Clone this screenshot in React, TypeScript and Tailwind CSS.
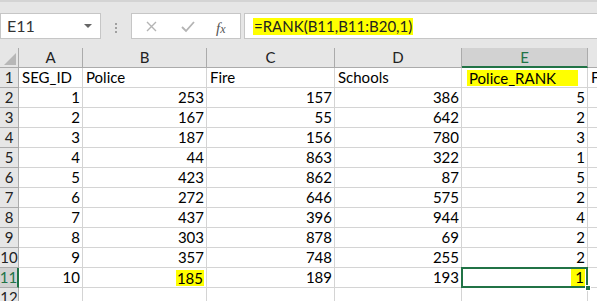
import React from "react";

const cols = [
  { key: "A", w: 64 },
  { key: "B", w: 124 },
  { key: "C", w: 128 },
  { key: "D", w: 127 },
  { key: "E", w: 126 },
];

const data: [number, number, number, number, number][] = [
  [1, 253, 157, 386, 5],
  [2, 167, 55, 642, 2],
  [3, 187, 156, 780, 3],
  [4, 44, 863, 322, 1],
  [5, 423, 862, 87, 5],
  [6, 272, 646, 575, 2],
  [7, 437, 396, 944, 4],
  [8, 303, 878, 69, 2],
  [9, 357, 748, 255, 2],
  [10, 185, 189, 193, 1],
];

const font = { fontFamily: "Lato, 'Open Sans', sans-serif" };

function Cell({ w, children, right, className = "" }: { w: number; children?: React.ReactNode; right?: boolean; className?: string }) {
  return (
    <div
      className={`shrink-0 h-full border-r border-b border-[#d4d4d4] bg-white flex items-center overflow-hidden whitespace-nowrap text-[15px] text-black ${right ? "justify-end pr-[2px]" : "pl-[3px]"} ${className}`}
      style={{ width: w }}
    >
      {children}
    </div>
  );
}

export default function App() {
  return (
    <div className="w-[597px] h-[301px] overflow-hidden bg-[#e6e6e6] relative" style={font}>
      {/* formula bar area */}
      <div className="h-[48px] border-t-[2px] border-[#d4d4d4] bg-[#e6e6e6] relative">
        <div className="absolute left-0 top-[11px] w-[101px] h-[26px] bg-white border border-[#c6c6c6] flex items-center pl-[6px] text-[16px] text-[#333]">
          E11
          <div className="absolute right-[8px] top-[10px] w-0 h-0 border-l-[4px] border-r-[4px] border-t-[4px] border-l-transparent border-r-transparent border-t-[#666]" />
        </div>
        <div className="absolute left-[115px] top-[21px] flex flex-col gap-[2px]">
          <div className="w-[2px] h-[2px] bg-[#a0a0a0]" />
          <div className="w-[2px] h-[2px] bg-[#a0a0a0]" />
          <div className="w-[2px] h-[2px] bg-[#a0a0a0]" />
        </div>
        <div className="absolute left-[131px] top-[11px] w-[110px] h-[26px] bg-white border border-[#c6c6c6] flex items-center">
          <svg className="absolute left-[14px] top-[7px]" width="11" height="11" viewBox="0 0 11 11">
            <path d="M1 1 L10 10 M10 1 L1 10" stroke="#b4b4b4" strokeWidth="1.4" />
          </svg>
          <svg className="absolute left-[49px] top-[7px]" width="14" height="12" viewBox="0 0 14 12">
            <path d="M1 6 L5 10 L13 1" stroke="#b4b4b4" strokeWidth="1.8" fill="none" />
          </svg>
          <span className="absolute left-[84px] top-[3px] text-[15px] italic text-[#555]" style={{ fontFamily: "'Liberation Serif', serif" }}>
            f<span className="text-[12px]">x</span>
          </span>
        </div>
        <div className="absolute left-[244px] top-[11px] w-[360px] h-[26px] bg-white border border-[#c6c6c6] flex items-center pl-[8px]">
          <span className="bg-[#ffff00] text-[15px] text-[#222] px-[1px] leading-[17px]">=RANK(B11,B11:B20,1)</span>
        </div>
      </div>

      {/* column header row */}
      <div className="flex h-[20px]">
        <div className="w-[19px] shrink-0 h-full border-r border-b border-[#ababab] bg-[#e6e6e6] relative">
          <div className="absolute right-[2px] bottom-[2px] w-0 h-0" style={{ borderRight: "12px solid #b7b7b7", borderTop: "12px solid transparent" }} />
        </div>
        {cols.map((c) => (
          <div
            key={c.key}
            className={`shrink-0 h-full flex items-center justify-center text-[15px] border-r ${c.key === "E" ? "bg-[#d2d2d2] border-b-[2px] border-b-[#217346] border-r-[#ababab] text-[#217346]" : "bg-[#e6e6e6] border-b border-[#ababab] text-[#222]"}`}
            style={{ width: c.w }}
          >
            {c.key}
          </div>
        ))}
        <div className="flex-1 h-full bg-[#e6e6e6] border-b border-[#ababab]" />
      </div>

      {/* row 1 */}
      <div className="flex h-[20px]">
        <div className="w-[19px] shrink-0 h-full border-r border-b border-[#ababab] bg-[#e6e6e6] flex items-center justify-center text-[15px] text-[#222]">1</div>
        <Cell w={64}>SEG_ID</Cell>
        <Cell w={124}>Police</Cell>
        <Cell w={128}>Fire</Cell>
        <Cell w={127}>Schools</Cell>
        <Cell w={126}>
          <span className="bg-[#ffff00] pl-[2px] pr-[22px] leading-[16px] ml-[2px]">Police_RANK</span>
        </Cell>
        <div className="flex-1 h-full bg-white border-b border-[#d4d4d4] flex items-center pl-[3px] text-[15px] overflow-hidden">Fire_RANK</div>
      </div>

      {data.map((r, i) => {
        const rowNum = i + 2;
        const last = rowNum === 11;
        return (
          <div key={rowNum} className="flex h-[20px]">
            <div
              className={`w-[19px] shrink-0 h-full border-b border-[#ababab] flex items-center justify-center text-[15px] ${last ? "bg-[#d2d2d2] border-r-[2px] border-r-[#217346] text-[#217346]" : "bg-[#e6e6e6] border-r text-[#222]"}`}
            >
              {rowNum}
            </div>
            <Cell w={64} right>{r[0]}</Cell>
            <Cell w={124} right>
              {last ? <span className="bg-[#ffff00] leading-[16px] px-[1px]">{r[1]}</span> : r[1]}
            </Cell>
            <Cell w={128} right>{r[2]}</Cell>
            <Cell w={127} right>{r[3]}</Cell>
            <Cell w={126} right className={last ? "relative !overflow-visible" : ""}>
              {last ? (
                <>
                  <span className="bg-[#ffff00] leading-[17px] pl-[4px] pr-[1px]">{r[4]}</span>
                  <div className="absolute left-[-1px] top-[-1px] w-[127px] h-[21px] border-[2px] border-[#217346] pointer-events-none" />
                  <div className="absolute right-[-4px] bottom-[-4px] w-[6px] h-[6px] bg-[#217346] border border-white" />
                </>
              ) : (
                r[4]
              )}
            </Cell>
            <div className="flex-1 h-full bg-white border-b border-[#d4d4d4]" />
          </div>
        );
      })}

      {/* row 12 partial */}
      <div className="flex h-[20px]">
        <div className="w-[19px] shrink-0 h-full border-r border-b border-[#ababab] bg-[#e6e6e6] flex items-center justify-center text-[15px] text-[#222]">12</div>
        {cols.map((c) => (
          <Cell key={c.key} w={c.w} />
        ))}
        <div className="flex-1 h-full bg-white" />
      </div>
    </div>
  );
}
